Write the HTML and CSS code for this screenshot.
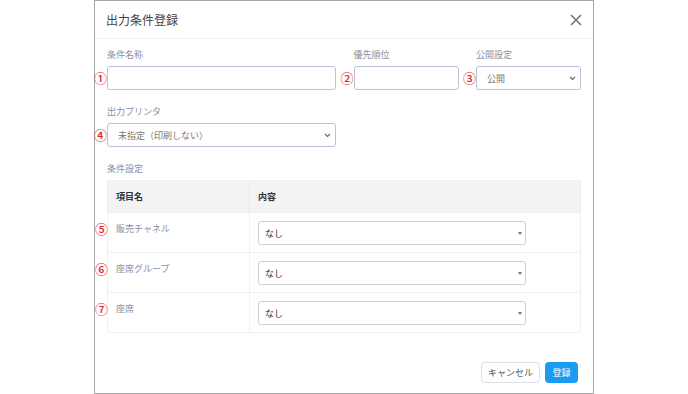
FILE: index.html
```html
<!DOCTYPE html>
<html lang="ja">
<head>
  <meta charset="UTF-8">
  <title>出力条件登録</title>
  <link rel="stylesheet" href="styles.css">
</head>
<body>
  <div class="modal">
    <div class="modal-header">
      <h2>出力条件登録</h2>
      <button class="close" type="button">
        <svg width="12" height="12" viewBox="0 0 12 12"><path d="M1 1L11 11M11 1L1 11" stroke="#666" stroke-width="1.4" fill="none"/></svg>
      </button>
    </div>

    <div class="modal-body">
      <div class="row-top">
        <div class="field">
          <label>条件名称</label>
          <div class="control"><span class="mark">①</span><input type="text"></div>
        </div>
        <div class="field">
          <label>優先順位</label>
          <div class="control"><span class="mark">②</span><input type="text"></div>
        </div>
        <div class="field">
          <label>公開設定</label>
          <div class="control"><span class="mark">③</span>
            <select class="select-blue"><option>公開</option></select>
            <svg class="chevron" width="7" height="5" viewBox="0 0 7 5"><path d="M1 1L3.5 3.5L6 1" stroke="#666" stroke-width="1.1" fill="none"/></svg>
          </div>
        </div>
      </div>

      <div class="field printer">
        <label>出力プリンタ</label>
        <div class="control"><span class="mark">④</span>
          <select class="select-blue"><option>未指定（印刷しない）</option></select>
          <svg class="chevron" width="7" height="5" viewBox="0 0 7 5"><path d="M1 1L3.5 3.5L6 1" stroke="#666" stroke-width="1.1" fill="none"/></svg>
        </div>
      </div>

      <div class="field">
        <label>条件設定</label>
        <table class="conditions">
          <thead>
            <tr><th class="col-name">項目名</th><th>内容</th></tr>
          </thead>
          <tbody>
            <tr>
              <td class="col-name"><span class="mark">⑤</span>販売チャネル</td>
              <td><div class="control small"><select class="select-gray"><option>なし</option></select><span class="caret"></span></div></td>
            </tr>
            <tr>
              <td class="col-name"><span class="mark">⑥</span>座席グループ</td>
              <td><div class="control small"><select class="select-gray"><option>なし</option></select><span class="caret"></span></div></td>
            </tr>
            <tr>
              <td class="col-name"><span class="mark">⑦</span>座席</td>
              <td><div class="control small"><select class="select-gray"><option>なし</option></select><span class="caret"></span></div></td>
            </tr>
          </tbody>
        </table>
      </div>
    </div>

    <div class="modal-footer">
      <button class="btn btn-cancel" type="button">キャンセル</button>
      <button class="btn btn-save" type="button">登録</button>
    </div>
  </div>
</body>
</html>
```

FILE: styles.css
```css
body {
  margin: 0;
  background-color: #fff;
  font-family: "Noto Sans CJK JP", "Noto Sans", sans-serif;
}
.modal {
  width: 500px;
  height: 394px;
  box-sizing: border-box;
  margin: 0 auto;
  border: 1px solid #a8a8a8;
  background-color: #fff;
  display: flex;
  flex-direction: column;
}
.modal-header {
  height: 38px;
  box-sizing: border-box;
  border-bottom: 1px solid #f0f0f0;
  display: flex;
  align-items: center;
  justify-content: space-between;
  padding: 0 11px;
}
.modal-header h2 {
  margin: 0;
  font-size: 12px;
  font-weight: normal;
  color: #444;
}
.close {
  border: none;
  background: none;
  padding: 0;
  width: 12px;
  height: 12px;
  display: flex;
}
.modal-body {
  padding: 9px 12px 0;
}
.row-top {
  display: grid;
  grid-template-columns: 229px 105px 105px;
  justify-content: space-between;
}
.field {
  margin-bottom: 15px;
}
.printer {
  width: 229px;
}
.field label {
  display: block;
  font-size: 9px;
  line-height: 14px;
  color: #8b8fa3;
  margin-bottom: 4px;
}
.control {
  position: relative;
  height: 24px;
}
.mark {
  position: absolute;
  right: 100%;
  top: 5px;
  font-size: 13px;
  line-height: 13px;
  font-weight: 500;
  color: #e3262b;
}
input,
select {
  display: block;
  width: 100%;
  height: 24px;
  box-sizing: border-box;
  margin: 0;
  font-family: inherit;
  font-size: 9px;
  color: #555;
  background-color: #fff;
  border-radius: 3px;
  outline: none;
  appearance: none;
  -webkit-appearance: none;
}
input,
.select-blue {
  border: 1px solid #bcc1d8;
}
.select-blue {
  padding: 0 10px;
  color: #777;
}
.chevron {
  position: absolute;
  right: 5px;
  top: 10px;
}
.conditions {
  width: 100%;
  border-collapse: collapse;
  border: 1px solid #eef0f4;
}
.conditions th,
.conditions td {
  padding: 8px 8px 7px;
  font-size: 9px;
  line-height: 16px;
  text-align: left;
  vertical-align: top;
  border-bottom: 1px solid #eef0f4;
}
.conditions th {
  background-color: #f3f3f3;
  color: #333;
  font-weight: bold;
}
.conditions th.col-name {
  border-right: 1px solid #e9e9e9;
}
.conditions td {
  height: 24px;
}
.conditions td.col-name {
  position: relative;
  width: 125px;
  color: #8b8fa3;
  border-right: 1px solid #eef0f4;
}
.conditions td.col-name .mark {
  top: 9px;
}
.control.small {
  width: 268px;
}
.select-gray {
  border: 1px solid #cfcfcf;
  padding: 0 6px;
  color: #333;
}
.caret {
  position: absolute;
  right: 4px;
  top: 11px;
  width: 0;
  height: 0;
  border-left: 2.5px solid transparent;
  border-right: 2.5px solid transparent;
  border-top: 3px solid #777;
}
.modal-footer {
  margin-top: auto;
  display: flex;
  justify-content: flex-end;
  gap: 5px;
  padding: 0 15px 10px;
}
.btn {
  height: 21px;
  font-family: inherit;
  font-size: 9px;
  border-radius: 4px;
  cursor: pointer;
}
.btn-cancel {
  width: 59px;
  background-color: #fff;
  border: 1px solid #dde0e6;
  color: #555;
}
.btn-save {
  width: 33px;
  background-color: #1b9cf0;
  border: none;
  color: #fff;
}
```
